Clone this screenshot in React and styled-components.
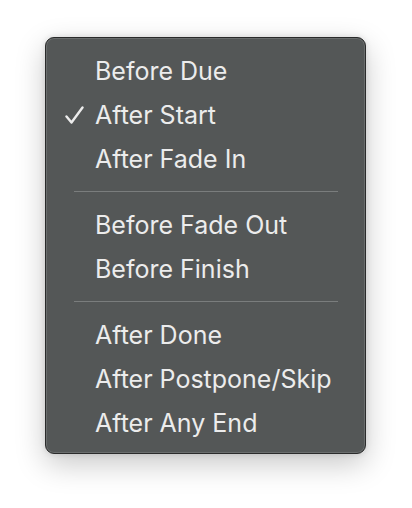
import React from "react";
import styled, { createGlobalStyle } from "styled-components";

const GlobalStyle = createGlobalStyle`
  html, body {
    margin: 0;
    padding: 0;
    background: #ffffff;
  }
  body {
    font-family: Inter, "Noto Sans", sans-serif;
  }
`;

const Page = styled.div`
  box-sizing: border-box;
  min-height: 100vh;
  padding: 37px 0 40px 45px;
`;

const Menu = styled.div`
  box-sizing: border-box;
  width: 321px;
  padding: 11px 0 8px;
  background: #545757;
  border: 1px solid #2a2b2b;
  border-radius: 9px;
  box-shadow: inset 0 0 0 1px #6a6d6d, 0 10px 30px rgba(0, 0, 0, 0.22),
    0 0 6px rgba(0, 0, 0, 0.12);
`;

const Item = styled.div`
  position: relative;
  height: 44px;
  display: flex;
  align-items: center;
  padding-left: 49px;
  color: #ececec;
  font-size: 25px;
  font-weight: 400;
`;

const Check = styled.svg`
  position: absolute;
  left: 19px;
  top: 13px;
`;

const Separator = styled.div`
  height: 1px;
  margin: 10px 27px 11px 28px;
  background: #7a7d7d;
`;

const groups = [
  ["Before Due", "After Start", "After Fade In"],
  ["Before Fade Out", "Before Finish"],
  ["After Done", "After Postpone/Skip", "After Any End"],
];

const selected = "After Start";

export default function App() {
  return (
    <>
      <GlobalStyle />
      <Page>
        <Menu>
          {groups.map((group, gi) => (
            <React.Fragment key={gi}>
              {gi > 0 && <Separator />}
              {group.map((label) => (
                <Item key={label}>
                  {label === selected && (
                    <Check width="19" height="19" viewBox="0 0 19 19">
                      <path
                        d="M1.5 10.5 L6.5 16.5 L17.5 1.5"
                        fill="none"
                        stroke="#ececec"
                        strokeWidth="2.4"
                        strokeLinecap="round"
                        strokeLinejoin="round"
                      />
                    </Check>
                  )}
                  {label}
                </Item>
              ))}
            </React.Fragment>
          ))}
        </Menu>
      </Page>
    </>
  );
}
